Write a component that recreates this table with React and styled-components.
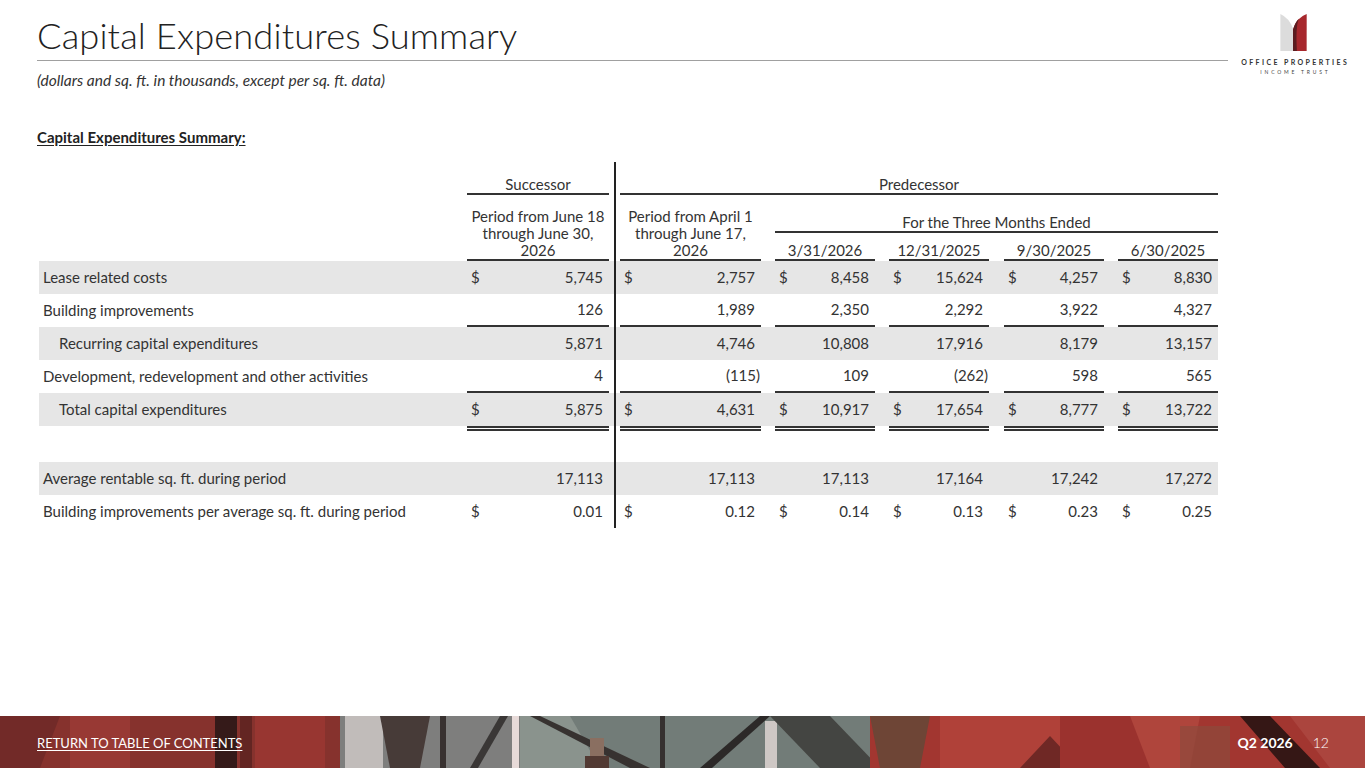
import React from "react";
import styled, { createGlobalStyle } from "styled-components";

const Global = createGlobalStyle`
  html, body { margin: 0; padding: 0; background: #fff; }
  body { font-family: Lato, "Noto Sans", "Liberation Sans", sans-serif; color: #333; }
  * { box-sizing: border-box; }
`;

const Page = styled.div`
  width: 1365px;
  height: 768px;
  display: flex;
  flex-direction: column;
  overflow: hidden;
  position: relative;
`;

const Main = styled.main`
  flex: 1;
  padding: 0 0 0 37px;
  display: flex;
  flex-direction: column;
`;

const Header = styled.header`
  display: flex;
  align-items: flex-start;
`;

const TitleBlock = styled.div`
  width: 1191px;
  padding-top: 13px;
`;

const Title = styled.h1`
  margin: 0;
  font-weight: 300;
  font-size: 36.3px;
  line-height: 44px;
  color: #222;
  letter-spacing: 0.1px;
  border-bottom: 1px solid #a0a0a0;
  padding-bottom: 3px;
`;

const Subtitle = styled.div`
  font-style: italic;
  font-size: 15.5px;
  line-height: 18px;
  margin-top: 10px;
  color: #333;
`;

const LogoBlock = styled.div`
  flex: 1;
  display: flex;
  flex-direction: column;
  align-items: center;
  padding-top: 14px;
  padding-right: 5px;
`;

const LogoName = styled.div`
  font-size: 7px;
  font-weight: 700;
  letter-spacing: 2.4px;
  margin-top: 7px;
  margin-right: -2.4px;
  color: #333;
  white-space: nowrap;
`;

const LogoSub = styled.div`
  font-size: 5px;
  letter-spacing: 2.8px;
  margin-top: 3px;
  margin-right: -2.8px;
  color: #444;
  white-space: nowrap;
`;

const SectionTitle = styled.div`
  margin-top: 39px;
  font-size: 15px;
  line-height: 18px;
  font-weight: 700;
  text-decoration: underline;
  text-underline-offset: 2px;
  color: #222;
`;

const Table = styled.div`
  margin-top: 16px;
  margin-left: 2px;
  width: 1179px;
  display: flex;
  flex-direction: column;
  font-size: 15px;
  color: #333;
`;

const COLS = "428px 142px 11px 141px 14px 100px 14px 100px 15px 100px 14px 100px";

const Row = styled.div`
  display: grid;
  grid-template-columns: ${COLS};
  grid-template-rows: ${(p) => p.$h || 33}px;
  background: ${(p) => (p.$shade ? "#e6e6e6" : "transparent")};
`;

const HeadRow = styled.div`
  display: grid;
  grid-template-columns: ${COLS};
  grid-template-rows: ${(p) => p.$rows};
`;

const Divider = styled.div`
  grid-column: 3;
  grid-row: ${(p) => p.$span || "1"};
  background: linear-gradient(#222, #222) no-repeat center / 2px 100%;
`;

const Label = styled.div`
  grid-column: 1;
  grid-row: 1;
  display: flex;
  align-items: center;
  padding-left: ${(p) => (p.$indent ? 20 : 4)}px;
  padding-bottom: 1px;
  white-space: nowrap;
`;

const HeadCell = styled.div`
  grid-column: ${(p) => p.$col};
  grid-row: ${(p) => p.$row || "1"};
  display: flex;
  align-items: flex-end;
  justify-content: center;
  text-align: center;
  line-height: 17px;
  padding-bottom: 0;
  border-bottom: 2px solid #333;
  white-space: nowrap;
`;

const Value = styled.div`
  grid-column: ${(p) => p.$col};
  grid-row: 1;
  display: flex;
  align-items: center;
  justify-content: space-between;
  padding: 0 ${(p) => (p.$neg ? 1 : 6)}px 1px 4px;
  border-bottom: ${(p) =>
    p.$rule === "single" ? "2px solid #333" : "none"};
  white-space: nowrap;
`;

const RuleCell = styled.div`
  grid-column: ${(p) => p.$col};
  grid-row: 1;
  border-top: 5px double #333;
`;

const Footer = styled.footer`
  height: 52px;
  position: relative;
  display: flex;
  align-items: center;
  padding: 0 36px 0 37px;
  color: #fff;
  font-size: 13px;
`;

const FooterArt = styled.svg`
  position: absolute;
  inset: 0;
  width: 100%;
  height: 100%;
`;

const FooterLink = styled.a`
  position: relative;
  color: #fff;
  text-decoration: underline;
  text-underline-offset: 2px;
  margin-top: 1px;
`;

const FooterRight = styled.div`
  position: relative;
  margin-left: auto;
  display: flex;
  gap: 20px;
  font-size: 14px;
`;

const Quarter = styled.span`
  font-weight: 700;
`;

const PageNum = styled.span`
  font-weight: 300;
`;

const valueCols = [2, 4, 6, 8, 10, 12];

const rows = [
  { label: "Lease related costs", shade: true, dollar: true, vals: ["5,745", "2,757", "8,458", "15,624", "4,257", "8,830"] },
  { label: "Building improvements", rule: "single", vals: ["126", "1,989", "2,350", "2,292", "3,922", "4,327"] },
  { label: "Recurring capital expenditures", indent: true, shade: true, vals: ["5,871", "4,746", "10,808", "17,916", "8,179", "13,157"] },
  { label: "Development, redevelopment and other activities", rule: "single", vals: ["4", "(115)", "109", "(262)", "598", "565"] },
  { label: "Total capital expenditures", indent: true, shade: true, dollar: true, vals: ["5,875", "4,631", "10,917", "17,654", "8,777", "13,722"] },
];

const rows2 = [
  { label: "Average rentable sq. ft. during period", shade: true, vals: ["17,113", "17,113", "17,113", "17,164", "17,242", "17,272"] },
  { label: "Building improvements per average sq. ft. during period", dollar: true, vals: ["0.01", "0.12", "0.14", "0.13", "0.23", "0.25"] },
];

function DataRow({ r }) {
  return (
    <Row $shade={r.shade}>
      <Label $indent={r.indent}>{r.label}</Label>
      {r.vals.map((v, i) => (
        <Value key={i} $col={valueCols[i]} $rule={r.rule} $neg={v.startsWith("(")}>
          <span>{r.dollar ? "$" : ""}</span>
          <span>{v}</span>
        </Value>
      ))}
      <Divider />
    </Row>
  );
}

function Logo() {
  return (
    <svg width="28" height="37" viewBox="0 0 28 38">
      <path d="M0 0 Q9 4 13 15 L13 38 L0 38 Z" fill="#dcdcdc" />
      <path d="M13 38 L13 16 Q16 4 27 0 L27 38 Z" fill="#a7282d" />
      <path d="M13 38 L13 16 Q15 9 19 5 Q15.5 13 17 38 Z" fill="#5b1c20" />
    </svg>
  );
}

function FooterPhoto() {
  return (
    <FooterArt viewBox="0 0 1365 52" preserveAspectRatio="none">
      <rect x="0" y="0" width="1365" height="52" fill="#8a3a36" />
      <rect x="0" y="0" width="340" height="52" fill="#86352f" />
      <polygon points="0,0 60,0 40,52 0,52" fill="#6f2c29" />
      <rect x="70" y="0" width="60" height="52" fill="#9a3d37" />
      <rect x="215" y="0" width="22" height="52" fill="#2a1a18" />
      <rect x="255" y="0" width="70" height="52" fill="#9a3a34" />
      <rect x="240" y="0" width="12" height="52" fill="#5e2623" />
      <rect x="340" y="0" width="180" height="52" fill="#7d8b8a" />
      <rect x="345" y="0" width="38" height="52" fill="#c9d2d0" />
      <polygon points="380,0 430,0 420,52 390,52" fill="#3e3f3c" />
      <rect x="440" y="0" width="6" height="52" fill="#2d3433" />
      <polygon points="470,52 500,0 508,0 478,52" fill="#2f3b3a" />
      <rect x="512" y="0" width="7" height="52" fill="#f4f4f2" />
      <rect x="520" y="0" width="350" height="52" fill="#6f8984" />
      <polygon points="520,0 570,0 600,52 520,52" fill="#8aa39d" />
      <polygon points="530,0 540,0 650,52 630,52" fill="#2c3533" />
      <rect x="590" y="22" width="14" height="30" fill="#8a7a6a" />
      <rect x="585" y="40" width="24" height="12" fill="#4a3e36" />
      <polygon points="700,52 760,0 770,0 712,52" fill="#1f2b2a" />
      <rect x="660" y="0" width="5" height="52" fill="#2a3332" />
      <rect x="765" y="5" width="12" height="47" fill="#d8e0dc" />
      <polygon points="770,0 830,0 880,52 820,52" fill="#3b4a47" />
      <rect x="870" y="0" width="495" height="52" fill="#a63a33" />
      <polygon points="870,0 930,0 920,52 880,52" fill="#6a4a3a" />
      <rect x="940" y="0" width="120" height="52" fill="#b5463d" />
      <polygon points="1020,52 1050,20 1080,52" fill="#6b2a26" />
      <rect x="1060" y="0" width="100" height="52" fill="#9e3530" />
      <polygon points="1130,0 1200,0 1190,52 1150,52" fill="#b44a40" />
      <rect x="1180" y="10" width="50" height="42" fill="#8e5040" opacity="0.7" />
      <polygon points="1240,0 1270,0 1320,52 1285,52" fill="#2a1614" />
      <polygon points="1290,0 1365,0 1365,52 1330,52" fill="#b04a43" />
      <rect x="0" y="0" width="1365" height="52" fill="#8a1f1f" opacity="0.12" />
    </FooterArt>
  );
}

export default function App() {
  return (
    <>
      <Global />
      <Page>
        <Main>
          <Header>
            <TitleBlock>
              <Title>Capital Expenditures Summary</Title>
              <Subtitle>(dollars and sq. ft. in thousands, except per sq. ft. data)</Subtitle>
            </TitleBlock>
            <LogoBlock>
              <Logo />
              <LogoName>OFFICE PROPERTIES</LogoName>
              <LogoSub>INCOME TRUST</LogoSub>
            </LogoBlock>
          </Header>
          <SectionTitle>Capital Expenditures Summary:</SectionTitle>
          <Table>
            <HeadRow $rows="33px">
              <HeadCell $col={2}>Successor</HeadCell>
              <Divider />
              <HeadCell $col="4 / 13">Predecessor</HeadCell>
            </HeadRow>
            <HeadRow $rows="38px 28px">
              <HeadCell $col={2} $row="1 / 3">
                Period from June 18
                <br />
                through June 30,
                <br />
                2026
              </HeadCell>
              <Divider $span="1 / 3" />
              <HeadCell $col={4} $row="1 / 3">
                Period from April 1
                <br />
                through June 17,
                <br />
                2026
              </HeadCell>
              <HeadCell $col="6 / 13" $row={1}>For the Three Months Ended</HeadCell>
              <HeadCell $col={6} $row={2}>3/31/2026</HeadCell>
              <HeadCell $col={8} $row={2}>12/31/2025</HeadCell>
              <HeadCell $col={10} $row={2}>9/30/2025</HeadCell>
              <HeadCell $col={12} $row={2}>6/30/2025</HeadCell>
            </HeadRow>
            {rows.map((r) => (
              <DataRow key={r.label} r={r} />
            ))}
            <Row $h={36}>
              {valueCols.map((c) => (
                <RuleCell key={c} $col={c} />
              ))}
              <Divider />
            </Row>
            {rows2.map((r) => (
              <DataRow key={r.label} r={r} />
            ))}
          </Table>
        </Main>
        <Footer>
          <FooterPhoto />
          <FooterLink href="#">RETURN TO TABLE OF CONTENTS</FooterLink>
          <FooterRight>
            <Quarter>Q2 2026</Quarter>
            <PageNum>12</PageNum>
          </FooterRight>
        </Footer>
      </Page>
    </>
  );
}
